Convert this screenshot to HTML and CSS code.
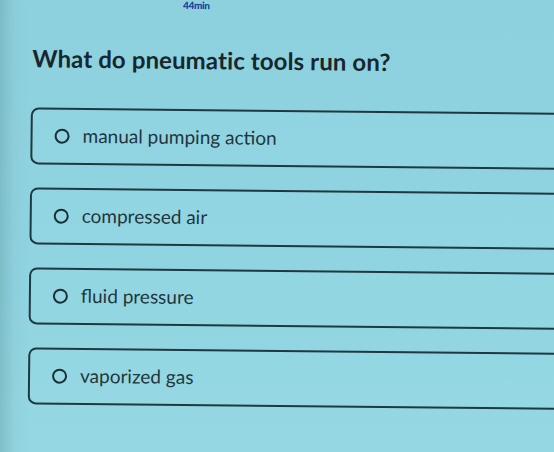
FILE: index.html
```html
<!DOCTYPE html>
<html lang="en">
<head>
<meta charset="utf-8">
<title>Quiz</title>
<link rel="stylesheet" href="styles.css">
</head>
<body>
<div class="screen">
  <div class="tilt">
    <div class="topbar"><span class="timer">44min</span></div>
    <h1 class="question">What do pneumatic tools run on?</h1>
    <div class="options">
      <label class="option"><span class="radio"></span><span class="label">manual pumping action</span></label>
      <label class="option"><span class="radio"></span><span class="label">compressed air</span></label>
      <label class="option"><span class="radio"></span><span class="label">fluid pressure</span></label>
      <label class="option"><span class="radio"></span><span class="label">vaporized gas</span></label>
    </div>
  </div>
</div>
</body>
</html>
```

FILE: styles.css
```css
html, body {
  margin: 0;
  padding: 0;
  height: 100%;
}

body {
  background: #8fd3df;
  font-family: Lato, "Open Sans", "Liberation Sans", sans-serif;
  overflow: hidden;
}

.screen {
  width: 554px;
  height: 452px;
  overflow: hidden;
  background:
    linear-gradient(90deg, rgba(110,170,178,0.55) 0px, rgba(130,190,200,0.25) 14px, rgba(143,211,223,0) 30px),
    linear-gradient(180deg, #8ed1de 0%, #90d4e1 60%, #95d8e3 100%);
}

.tilt {
  transform: rotate(0.6deg);
  transform-origin: 0 0;
}

.topbar {
  height: 10px;
  padding-left: 183px;
}

.timer {
  display: block;
  font-size: 10px;
  line-height: 6px;
  font-weight: 900;
  color: #1a419c;
  letter-spacing: -0.3px;
}

.question {
  margin: 34px 0 0 33px;
  font-size: 24px;
  line-height: 28px;
  font-weight: 700;
  color: #18262d;
  letter-spacing: 0.1px;
}

.options {
  display: flex;
  flex-direction: column;
  gap: 23px;
  margin: 35px 0 0 32px;
}

.option {
  display: flex;
  align-items: center;
  gap: 13px;
  height: 53px;
  width: 600px;
  padding-left: 22px;
  border: 2px solid #1f3940;
  border-radius: 8px;
  box-sizing: content-box;
  background: rgba(150, 218, 230, 0.25);
}

.radio {
  width: 11px;
  height: 11px;
  border: 2.5px solid #1b2f36;
  border-radius: 50%;
  flex: none;
}

.label {
  font-size: 19px;
  line-height: 22px;
  color: #22363d;
  margin-top: -2px;
}
```
